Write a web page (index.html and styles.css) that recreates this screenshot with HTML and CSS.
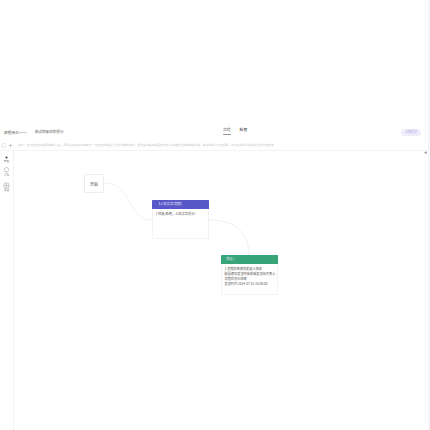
FILE: index.html
```html
<!DOCTYPE html>
<html lang="zh">
<head>
<meta charset="utf-8">
<title>流程</title>
<link rel="stylesheet" href="styles.css">
</head>
<body>
<div class="page">
  <div class="blank"></div>
  <header class="head">
    <div class="titles">
      <span class="back">流程待办一一</span>
      <span class="name">测试同意后的提示</span>
    </div>
    <nav class="tabs">
      <span class="tab active">流程</span>
      <span class="tab">检查</span>
    </nav>
    <button class="submit">立即提交</button>
  </header>
  <div class="notice">
    <svg class="nicon" viewBox="0 0 6 6"><rect x="1" y="1" width="4" height="4" fill="none" stroke="#ccc" stroke-width=".6"/></svg>
    <svg class="nicon" viewBox="0 0 6 6"><path d="M3 .8v4.400M.8 3h4.400" stroke="#aaa" stroke-width=".7"/></svg>
    <span class="ntext">提示：在流程节点中配置审批人后，同意后将自动流转到下一节点并向相关人员发送通知消息；拒绝后流程将退回到发起人并结束当前的审批流程，请仔细确认节点配置，修改后请及时保存并重新发布版本</span>
  </div>
  <main class="work">
    <aside class="side">
      <div class="tool">
        <svg class="dot" viewBox="0 0 4 4"><circle cx="2" cy="2" r="1.400" fill="#444"/></svg>
        <span>开始</span>
      </div>
      <div class="tool">
        <svg class="ticon" viewBox="0 0 8 8"><circle cx="4" cy="3" r="2.500" fill="none" stroke="#aaa" stroke-width=".7"/><path d="M2 7.300h4" stroke="#aaa" stroke-width=".7"/></svg>
        <span>人工</span>
      </div>
      <div class="tool">
        <svg class="ticon" viewBox="0 0 8 8"><circle cx="4" cy="4" r="3" fill="none" stroke="#999" stroke-width=".7"/><circle cx="4" cy="4" r="1.200" fill="#aaa"/></svg>
        <span>测试</span>
      </div>
    </aside>
    <section class="canvas">
      <svg class="edges" viewBox="0 0 414 279">
        <path d="M90 32C120 32 112 69 138 69" fill="none" stroke="#f0f0f0" stroke-width="1"/>
        <path d="M195 69C225 69 235 85 235 104" fill="none" stroke="#f0f0f0" stroke-width="1"/>
      </svg>
      <div class="node start">开始</div>
      <div class="node card approve">
        <div class="bar purple">【人机交互流程】</div>
        <p class="line">1 同意/拒绝，人机交互提示?</p>
      </div>
      <div class="node card finish">
        <div class="bar green">消息 |</div>
        <p class="line">1 流程结束通知发起人结果</p>
        <p class="line">配置通知发送内容模板发送给负责人</p>
        <p class="line">流程状态已结束</p>
        <p class="line">发送时间 2024-07-01 10:30:00</p>
      </div>
      <span class="collapse">◀</span>
    </section>
  </main>
</div>
</body>
</html>
```
FILE: styles.css
```css
* { box-sizing: border-box; }
html, body { margin: 0; height: 100%; }
body { background: #fff; font-family: "Noto Sans CJK SC", "Noto Sans", sans-serif; color: #555; }
.page { width: 430px; height: 430px; display: flex; flex-direction: column; overflow: hidden; border-right: 2px solid #f5f5fb; }
.blank { height: 124px; flex: none; }
.head { height: 16px; flex: none; display: flex; align-items: center; padding: 0 7px 0 3.500px; }
.titles { display: flex; gap: 8px; width: 219.500px; font-size: 3.900px; color: #555; }
.name { font-size: 3.600px; }
.tabs { display: flex; gap: 9px; font-size: 3.800px; margin-top: -2px; flex: 1; }
.tab { color: #444; font-weight: 500; padding-bottom: 2px; border-bottom: .6px solid transparent; }
.tab.active { color: #888; border-bottom-color: #999; }
.submit { width: 20px; height: 7px; border: 0; border-radius: 4px; padding: 0; background: #eeedfb; color: #a9a5e2; font: 3px "Noto Sans CJK SC", sans-serif; }
.notice { height: 11px; flex: none; display: flex; align-items: center; gap: 2px; padding-left: 1px; border-bottom: .6px solid #f3f3f3; }
.nicon { width: 5px; height: 5px; flex: none; }
.ntext { font-size: 2.850px; color: #c8c8c8; white-space: nowrap; margin-left: 3px; }
.work { flex: 1; display: flex; min-height: 0; }
.side { width: 14px; flex: none; border-right: .6px solid #f2f2f2; display: flex; flex-direction: column; align-items: center; padding-top: 4.500px; gap: 4px; }
.tool { display: flex; flex-direction: column; align-items: center; font-size: 2.800px; color: #777; line-height: 3.500px; }
.dot { width: 3px; height: 3px; margin-bottom: 1px; }
.ticon { width: 7px; height: 7px; }
.canvas { flex: 1; position: relative; }
.edges { position: absolute; inset: 0; width: 100%; height: 100%; }
.node { position: absolute; background: #fff; }
.start { left: 70px; top: 23px; width: 20px; height: 19px; border: .6px solid #ececec; border-radius: 1.500px; display: flex; align-items: center; justify-content: center; font-size: 4px; color: #444; }
.card { width: 57px; border: .6px solid #f3f3f3; }
.approve { left: 138px; top: 49px; height: 39px; }
.finish { left: 207px; top: 104px; height: 40px; }
.bar { height: 8.500px; font-size: 3.300px; color: #e6e6f8; padding-left: 4.500px; line-height: 8.500px; margin: -.6px -.6px 0; border-radius: .8px .8px 0 0; }
.purple { background: #5a57c8; }
.green { background: #37a578; }
.line { margin: 0 0 0 2.500px; font-size: 3.200px; color: #555; line-height: 5px; white-space: nowrap; }
.approve .line { margin-top: 2.500px; }
.finish .line:first-of-type { margin-top: 2px; }
.collapse { position: absolute; right: 1px; top: 0; font-size: 3px; color: #888; }
```
